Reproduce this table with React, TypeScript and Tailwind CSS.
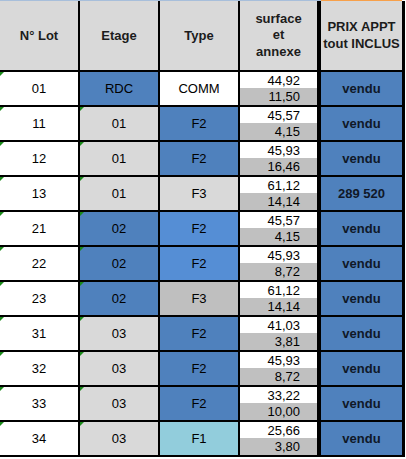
const rows = [
  { lot: "01", etage: "RDC", etageBg: "bg-[#4f81bd]", type: "COMM", typeBg: "bg-white", s1: "44,92", s2: "11,50", prix: "vendu", tri2: false },
  { lot: "11", etage: "01", etageBg: "bg-[#d9d9d9]", type: "F2", typeBg: "bg-[#4f81bd]", s1: "45,57", s2: "4,15", prix: "vendu", tri2: true },
  { lot: "12", etage: "01", etageBg: "bg-[#d9d9d9]", type: "F2", typeBg: "bg-[#4f81bd]", s1: "45,93", s2: "16,46", prix: "vendu", tri2: true },
  { lot: "13", etage: "01", etageBg: "bg-[#d9d9d9]", type: "F3", typeBg: "bg-[#d9d9d9]", s1: "61,12", s2: "14,14", prix: "289 520", tri2: true },
  { lot: "21", etage: "02", etageBg: "bg-[#4f81bd]", type: "F2", typeBg: "bg-[#558ed5]", s1: "45,57", s2: "4,15", prix: "vendu", tri2: true },
  { lot: "22", etage: "02", etageBg: "bg-[#4f81bd]", type: "F2", typeBg: "bg-[#558ed5]", s1: "45,93", s2: "8,72", prix: "vendu", tri2: true },
  { lot: "23", etage: "02", etageBg: "bg-[#4f81bd]", type: "F3", typeBg: "bg-[#bfbfbf]", s1: "61,12", s2: "14,14", prix: "vendu", tri2: true },
  { lot: "31", etage: "03", etageBg: "bg-[#d9d9d9]", type: "F2", typeBg: "bg-[#4f81bd]", s1: "41,03", s2: "3,81", prix: "vendu", tri2: true },
  { lot: "32", etage: "03", etageBg: "bg-[#d9d9d9]", type: "F2", typeBg: "bg-[#4f81bd]", s1: "45,93", s2: "8,72", prix: "vendu", tri2: true },
  { lot: "33", etage: "03", etageBg: "bg-[#d9d9d9]", type: "F2", typeBg: "bg-[#4f81bd]", s1: "33,22", s2: "10,00", prix: "vendu", tri2: true },
  { lot: "34", etage: "03", etageBg: "bg-[#d9d9d9]", type: "F1", typeBg: "bg-[#92cddc]", s1: "25,66", s2: "3,80", prix: "vendu", tri2: true },
];

// little green "number stored as text" marker
function Marker() {
  return (
    <span className="absolute left-0 top-0 h-0 w-0 border-r-[4px] border-t-[4px] border-r-transparent border-t-[#1a8a1a]" />
  );
}

export default function App() {
  return (
    <div className="h-[459px] w-[406px] bg-white font-['Liberation_Sans',Arial,sans-serif] text-[13px] text-black">
      <div className="flex">
        <div className="h-px w-[321px] bg-[#a8bfdb]" />
        <div className="h-px w-[81px] bg-[#f7a04a]" />
      </div>

      <div className="flex w-[405px] flex-col gap-[2px] bg-black pb-[2px] pr-[3px]">
        {/* header */}
        <div className="flex h-[69px] gap-[2px] font-bold text-[#1c1c1c]">
          <div className="flex w-[78px] items-center justify-center bg-[#d9d9d9]">N° Lot</div>
          <div className="flex w-[78px] items-center justify-center bg-[#d9d9d9]">Etage</div>
          <div className="flex w-[78px] items-center justify-center bg-[#d9d9d9]">Type</div>
          <div className="flex w-[77px] items-center justify-center bg-[#d9d9d9] text-center leading-[16.5px]">
            surface
            <br />
            et
            <br />
            annexe
          </div>
          <div className="ml-[2px] flex w-[81px] items-center justify-center bg-[#d9d9d9] text-center leading-[16.5px]">
            PRIX APPT
            <br />
            tout INCLUS
          </div>
        </div>

        {rows.map((r) => (
          <div key={r.lot} className="flex h-[33px] gap-[2px]">
            <div className="relative flex w-[78px] items-center justify-center bg-white">
              <Marker />
              {r.lot}
            </div>
            <div className={`relative flex w-[78px] items-center justify-center ${r.etageBg}`}>
              {r.tri2 && <Marker />}
              {r.etage}
            </div>
            <div className={`flex w-[78px] items-center justify-center ${r.typeBg}`}>{r.type}</div>
            <div className="flex w-[77px] flex-col text-right leading-none">
              <div className="flex h-[16px] items-center justify-end bg-white pr-[17px]">{r.s1}</div>
              <div className="flex h-[17px] items-center justify-end bg-[#c0c0c0] pr-[17px]">{r.s2}</div>
            </div>
            <div className="ml-[2px] flex w-[81px] items-center justify-center bg-[#4f81bd] font-bold text-[#101828]">
              {r.prix}
            </div>
          </div>
        ))}
      </div>
    </div>
  );
}
